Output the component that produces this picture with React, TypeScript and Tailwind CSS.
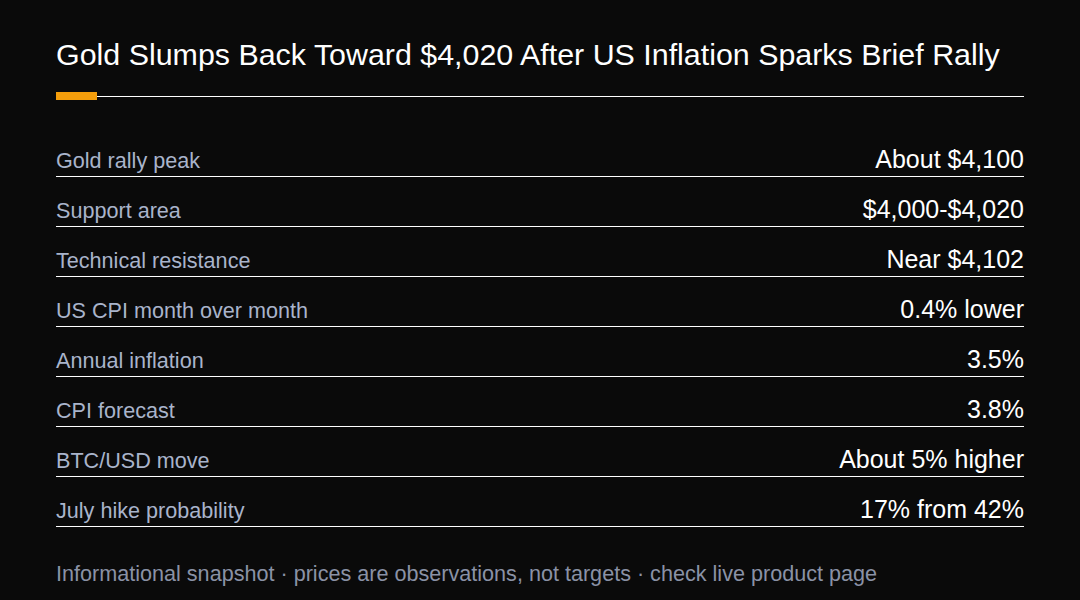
import React from 'react';

const rows: { label: string; value: string }[] = [
  { label: 'Gold rally peak', value: 'About $4,100' },
  { label: 'Support area', value: '$4,000-$4,020' },
  { label: 'Technical resistance', value: 'Near $4,102' },
  { label: 'US CPI month over month', value: '0.4% lower' },
  { label: 'Annual inflation', value: '3.5%' },
  { label: 'CPI forecast', value: '3.8%' },
  { label: 'BTC/USD move', value: 'About 5% higher' },
  { label: 'July hike probability', value: '17% from 42%' },
];

export default function App() {
  return (
    <div className="w-[1080px] h-[600px] bg-[#0a0a0a] overflow-hidden font-['Liberation_Sans',Arial,sans-serif]">
      <div className="px-[56px] pt-[36px]">
        <h1 className="text-[30.4px] leading-[36px] text-white font-normal whitespace-nowrap">
          Gold Slumps Back Toward $4,020 After US Inflation Sparks Brief Rally
        </h1>

        <div className="mt-[20px] flex items-start h-2">
          <div className="w-[41px] h-2 bg-[#f59e0b]" />
          <div className="flex-1 h-px mt-1 bg-white" />
        </div>

        <div className="mt-[27px]">
          {rows.map((r) => (
            <div
              key={r.label}
              className="h-[50px] flex items-baseline justify-between pt-[17px] border-b border-white"
            >
              <span className="text-[21.6px] leading-[30px] text-[#a9b4cb]">{r.label}</span>
              <span className="text-[25px] leading-[30px] text-white">{r.value}</span>
            </div>
          ))}
        </div>

        <p className="mt-[34px] text-[21.6px] leading-[26px] text-[#8a92a6] whitespace-nowrap">
          Informational snapshot · prices are observations, not targets · check live product page
        </p>
      </div>
    </div>
  );
}
